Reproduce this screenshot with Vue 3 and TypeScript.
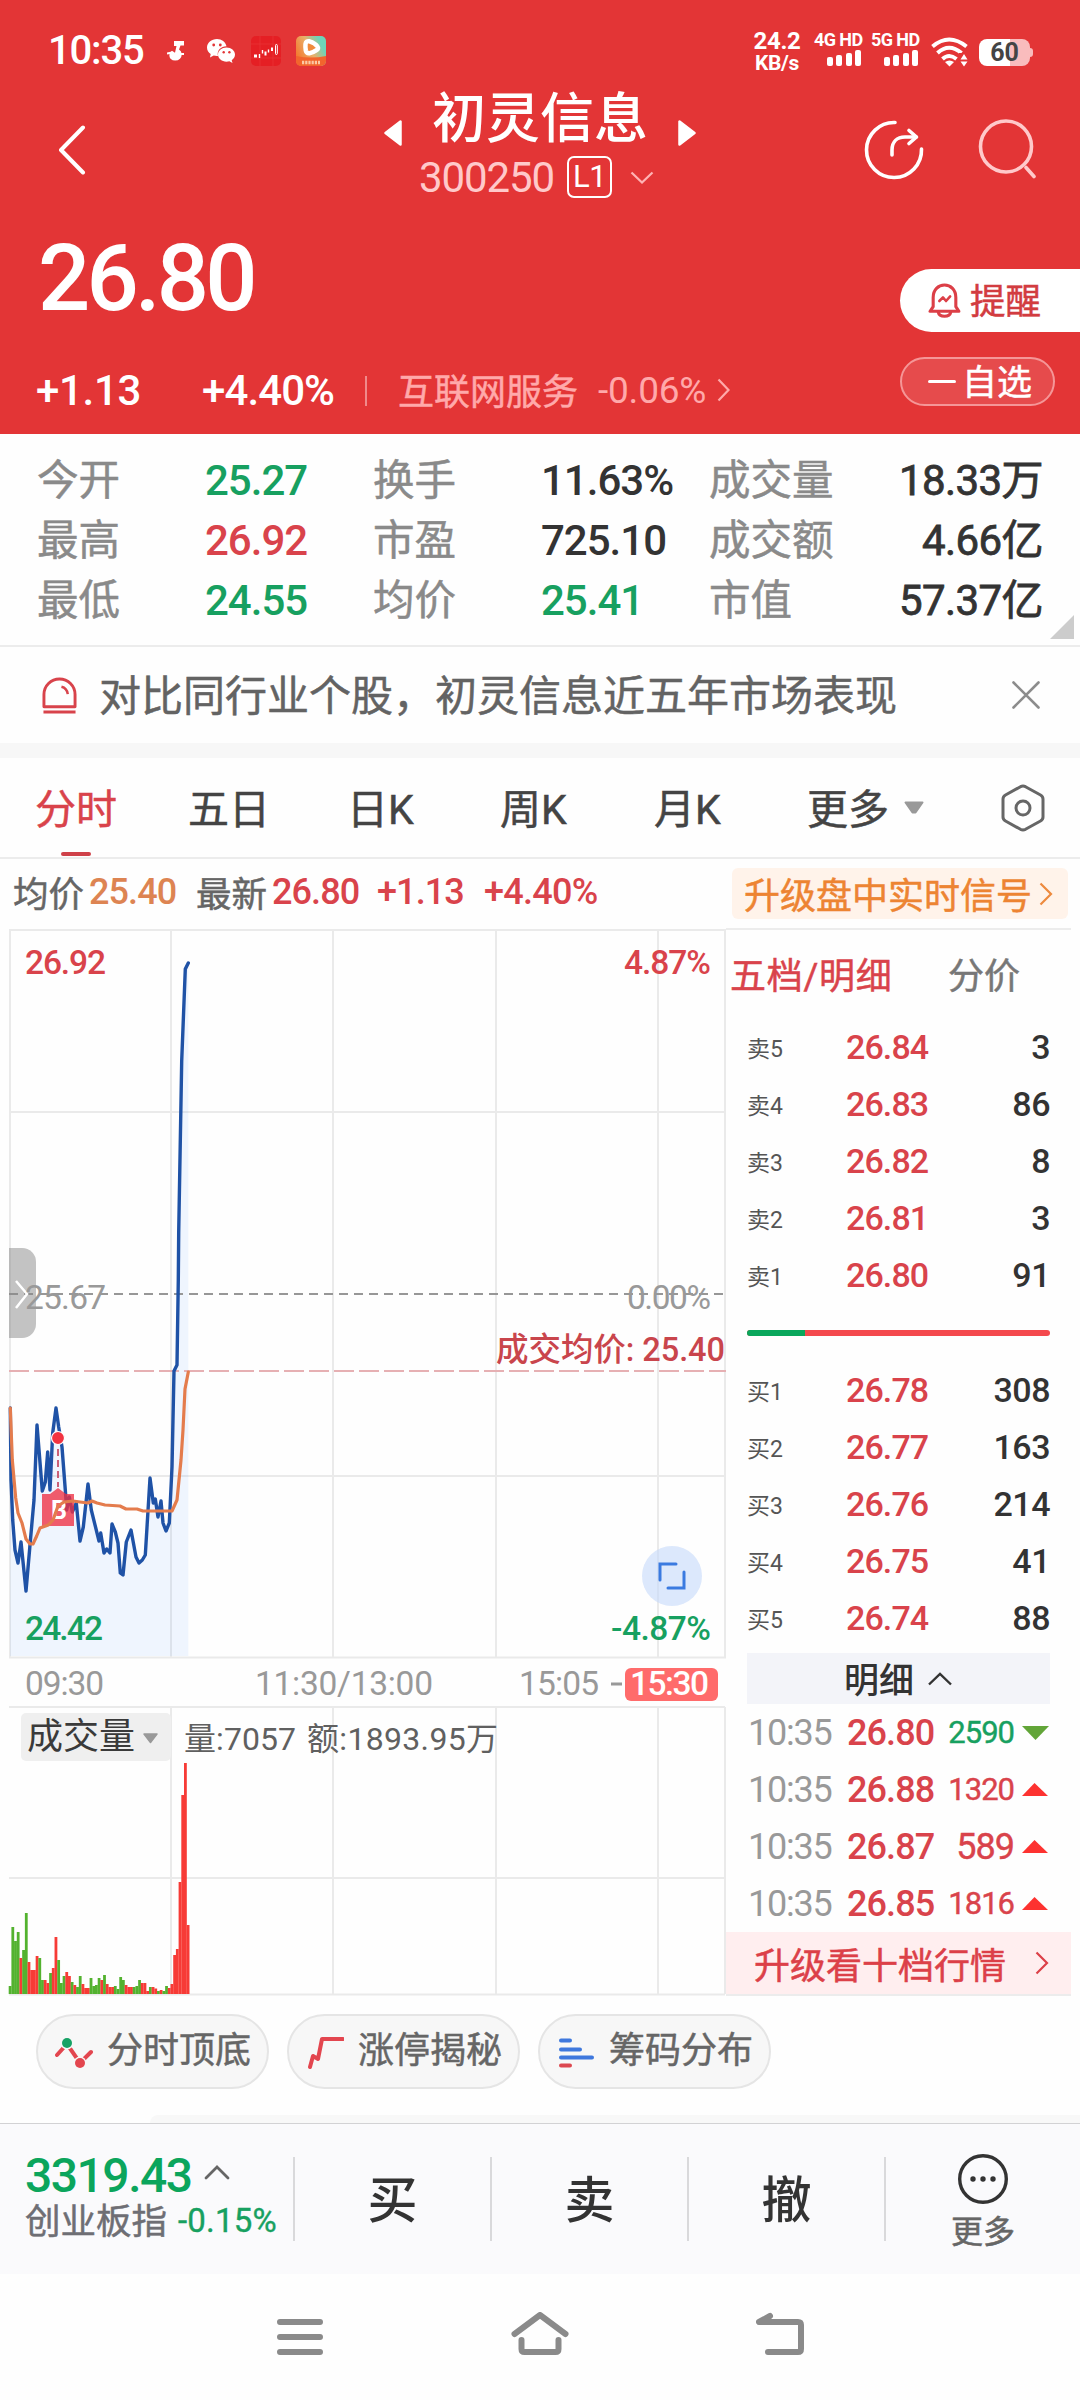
<script setup lang="ts">
type Tone = 'up' | 'down' | 'plain'

interface Stat { label: string; value: string; tone: Tone }
interface Quote { label: string; price: string; volume: string }
interface Tick { price: string; volume: string; tone: Tone; large?: boolean }

const stats: Stat[] = [
  { label: '今开', value: '25.27', tone: 'down' },
  { label: '换手', value: '11.63%', tone: 'plain' },
  { label: '成交量', value: '18.33万', tone: 'plain' },
  { label: '最高', value: '26.92', tone: 'up' },
  { label: '市盈', value: '725.10', tone: 'plain' },
  { label: '成交额', value: '4.66亿', tone: 'plain' },
  { label: '最低', value: '24.55', tone: 'down' },
  { label: '均价', value: '25.41', tone: 'down' },
  { label: '市值', value: '57.37亿', tone: 'plain' },
]

const asks: Quote[] = [
  { label: '卖5', price: '26.84', volume: '3' },
  { label: '卖4', price: '26.83', volume: '86' },
  { label: '卖3', price: '26.82', volume: '8' },
  { label: '卖2', price: '26.81', volume: '3' },
  { label: '卖1', price: '26.80', volume: '91' },
]
const bids: Quote[] = [
  { label: '买1', price: '26.78', volume: '308' },
  { label: '买2', price: '26.77', volume: '163' },
  { label: '买3', price: '26.76', volume: '214' },
  { label: '买4', price: '26.75', volume: '41' },
  { label: '买5', price: '26.74', volume: '88' },
]
const ticks: Tick[] = [
  { price: '26.80', volume: '2590', tone: 'down' },
  { price: '26.88', volume: '1320', tone: 'up' },
  { price: '26.87', volume: '589', tone: 'up', large: true },
  { price: '26.85', volume: '1816', tone: 'up' },
]

const gridX = [171, 333, 496, 658]

const priceLine =
  '10.3,1408 11,1480 12.7,1520 15,1550 18,1563 21,1542 26,1591 30.7,1537 34,1500 37,1425 42.3,1491 45.3,1482 47.7,1452 50,1490 52.7,1433 56,1408 58.7,1427 62,1447 65.3,1490 66.7,1510 69.3,1497 72.3,1512 76.3,1503 80,1541 83.3,1527 88,1484 91.3,1510 99,1541 100.7,1533 104,1553 106.7,1549 110,1553 112,1524 115.3,1532 118,1543 120.3,1573 123,1575 126.3,1542 131,1530 136,1557 139,1563 142.3,1560 145.3,1555 150,1478 153.3,1503 155.3,1499 158,1517 161,1501 163,1523 166,1531 169.3,1523 172,1467 174,1371 177,1365 178.3,1280 178.7,1232 181.7,1061 185.3,969 188.3,963'
const areaShape = `10,1656 ${priceLine} 188.3,1656`
const averageLine =
  '10.3,1408 12.3,1460 15.7,1498 18,1513 22,1523 26,1539 30,1544 33,1544 36.7,1536 40,1528 48.3,1525 53,1520 58,1506 64,1502 73,1501 80,1502 88,1503 92,1501 97,1503 105,1505 120,1506 126,1509 137,1509 143,1511 172,1511 177,1500 181,1460 183,1430 185,1389 188.3,1372'

const volumeHeights = [
  8, 67, 53, 62, 36, 44, 81, 32, 24, 24, 38, 36, 14, 14, 11, 21, 26, 57, 34, 11, 18, 22, 18, 12, 9, 7, 18, 10, 6, 6,
  16, 8, 9, 16, 14, 19, 10, 7, 7, 8, 5, 17, 14, 9, 7, 7, 7, 8, 14, 11, 11, 3, 7, 7, 5.5, 3, 4, 3, 8, 6, 10, 39, 45,
  112, 199, 231, 69,
]
const volumeTones = 'ggggrggrrrrggrrgrrgggrrgrggrrrggggrgrrrgggg' + 'rrrgggrrrgrrgrggrrrrrrrr'
const bars = volumeHeights.map((height, i) => ({
  x: 8.7 + i * 2.697,
  y: 1994 - height,
  height,
  color: volumeTones[i] === 'g' ? '#53b22f' : '#f73b36',
}))
</script>

<template>
  <div class="screen">
    <header class="hero">
      <div class="status">
        <span class="clock">10:35</span>
        <svg class="s-note" viewBox="0 0 18 20"><path d="M7 0h10v4.500h-3.500L12 8.500a6 6 0 0 1 1 9.200 7 7 0 0 1-9.500 0 5.500 5.500 0 0 1 1.500-8l3 2 1.500-6.700H7z" fill="#fff" /><path d="M0 12.500l5-1M12 13h5" stroke="#fff" stroke-width="1.800" /></svg>
        <svg class="s-chat" viewBox="0 0 28 24">
          <path d="M10 0C4.400 0 0 3.800 0 8.500c0 2.700 1.400 5 3.700 6.500L3 18.500l3.700-2c1 .3 2.200.5 3.300.5h1C9.500 11.500 14 7.300 19.500 7.200 18.500 3 14.700 0 10 0z" fill="#fff" />
          <path d="M19.500 8.500c-4.700 0-8.500 3.200-8.500 7.100s3.800 7.200 8.500 7.200c1 0 2-.2 2.900-.5l3.100 1.700-.8-2.800c2-1.300 3.300-3.300 3.300-5.600 0-3.900-3.800-7.100-8.500-7.100z" fill="#fff" />
          <g fill="#e33536"><circle cx="6.700" cy="6" r="1.400" /><circle cx="13.300" cy="6" r="1.400" /><circle cx="16.700" cy="13.200" r="1.200" /><circle cx="22.400" cy="13.200" r="1.200" /></g>
        </svg>
        <svg class="s-stock" viewBox="0 0 30 30">
          <rect width="30" height="30" rx="5" fill="#e51f24" />
          <path d="M0 8h30M0 22h30M9 0v30M22 0v30" stroke="#ea3336" stroke-width=".8" />
          <path d="M3 18.500h3v3H3zM13.500 15.500h2v4h-2zM20 11.500h2V15h-2z" fill="#fff" /><path d="M8.500 18v4M11.500 14v3.500M17.500 13.500v3" stroke="#fff" stroke-width="1.400" /><rect x="24.500" y="8.500" width="1.800" height="10" rx=".9" fill="none" stroke="#fff" />
        </svg>
        <svg class="s-video" viewBox="0 0 30 30">
          <defs><linearGradient id="vid" x1="0" y1=".6" x2="1" y2=".1"><stop offset="0" stop-color="#f47a30" /><stop offset=".45" stop-color="#e9b06a" /><stop offset=".8" stop-color="#6fd3b8" /></linearGradient></defs>
          <rect width="30" height="30" rx="5" fill="url(#vid)" />
          <path d="M0 20q15 3 30 0v5a5 5 0 0 1-5 5H5a5 5 0 0 1-5-5z" fill="#f2652d" />
          <path d="M9.500 8q.5-3.500 4-2.700 5.500 1.700 8 5.200 1.500 2-1 3.700-3.500 2.500-7 3-3 .3-3.700-2.700-.6-3-.3-6.500z" fill="#f08a3c" stroke="#fff" stroke-width="4.500" stroke-linejoin="round" />
          <path d="M6 26.500h18" stroke="#fbc9a4" stroke-width="3.500" stroke-dasharray="2.200 1" />
        </svg>
        <div class="speed"><b>24.2</b><b>KB/s</b></div>
        <div class="net net-a"><b>4G HD</b><i /><i /><i /><i /></div>
        <div class="net net-b"><b>5G HD</b><i /><i /><i /><i /></div>
        <svg class="wifi" viewBox="0 0 37 30">
          <g fill="none" stroke="#fff" stroke-width="4"><path d="M1.500 9.500Q18 -4.500 35.500 9.500" /><path d="M6.500 16Q18 5.500 30.500 16" /><path d="M11.500 22Q18 16 25.500 22" /></g>
          <path d="M14 25q4.500-3 9 0l-4.500 4.500z" fill="#fff" /><path d="M28 16h10v14H28z" fill="#e33536" /><path d="M29.500 22.500l3.500-5.500 3.500 5.500zM29.500 24.500l3.500 5 3.500-5z" fill="#fff" />
        </svg>
        <div class="battery">60</div>
      </div>

      <div class="title-bar">
        <svg class="back" viewBox="0 0 28 50"><path d="M25 2.500L3 25l22 22.500" fill="none" stroke="#fff" stroke-width="4" stroke-linecap="round" stroke-linejoin="round" /></svg>
        <div class="name-block">
          <div class="name-row">
            <svg class="tri" viewBox="0 0 18 26"><path d="M16.500 1.500v23L1.500 13z" fill="#fff" stroke="#fff" stroke-width="2.500" stroke-linejoin="round" /></svg>
            <h1>初灵信息</h1>
            <svg class="tri" viewBox="0 0 18 26"><path d="M1.500 1.500v23L16.500 13z" fill="#fff" stroke="#fff" stroke-width="2.500" stroke-linejoin="round" /></svg>
          </div>
          <div class="code-row">
            <span class="code">300250</span><span class="level">L1</span>
            <svg class="code-more" viewBox="0 0 24 13"><path d="M1.500 1.500L12 11.500 22.500 1.500" fill="none" stroke="#ffb3b4" stroke-width="2.200" /></svg>
          </div>
        </div>
        <svg class="share" viewBox="0 0 60 60">
          <g fill="none" stroke="#fff" stroke-width="3.600" stroke-linecap="round" stroke-linejoin="round"><path d="M31 2.500A27.500 27.500 0 1 0 57.500 29" /><path d="M28 35v-5c0-8 5-13 13-13h11" /><path d="M45 10.500l7.500 6.500-7.500 6.500" /></g>
        </svg>
        <svg class="search" viewBox="0 0 60 60"><g fill="none" stroke="#ffc9ca" stroke-width="3.600" stroke-linecap="round"><circle cx="29" cy="27.500" r="25.500" /><path d="M49 48.500l8 9" /></g></svg>
      </div>

      <div class="price-row">
        <strong class="price">26.80</strong>
        <div class="remind">
          <svg viewBox="0 0 32 34"><g fill="none" stroke="#dc3f47" stroke-width="3" stroke-linejoin="round" stroke-linecap="round"><path d="M2 27.500h28l-3-4.500v-9C27 6.500 22 2 16 2S5 6.500 5 14v9z" /><path d="M10 28.500c1 5 11 5 12 0" /><path d="M11 17.500l3.500-3.500 3 3.500 4-4.500" stroke-width="2.500" /></g></svg>
          <span class="cn">提醒</span>
        </div>
      </div>

      <div class="change-row">
        <span class="chg">+1.13</span>
        <span class="pct">+4.40%</span>
        <i class="bar" />
        <span class="sector">互联网服务</span>
        <span class="sector-pct">-0.06%</span>
        <svg class="sector-go" viewBox="0 0 13 24"><path d="M1.500 1.500L11.500 12 1.500 22.500" fill="none" stroke="#ffa9aa" stroke-width="2.200" /></svg>
        <div class="watch"><i /><span class="cn">自选</span></div>
      </div>
    </header>

    <section class="stats">
      <div v-for="s in stats" :key="s.label" class="stat"><span class="s-label">{{ s.label }}</span><span :class="['s-value', s.tone]">{{ s.value }}</span></div>
      <i class="corner" />
    </section>

    <section class="notice">
      <svg class="alarm" viewBox="0 0 36 38"><g fill="none" stroke="#d8434b" stroke-width="3"><path d="M2 30.500V18a16 16 0 0 1 32 0v12.500z" stroke-linejoin="round" /><path d="M1.500 36h33" /><path d="M20 10c4 1 6 3.500 6.500 7.500" stroke-width="2.500" /></g></svg>
      <span class="cn">对比同行业个股，初灵信息近五年市场表现</span>
      <svg class="close" viewBox="0 0 28 28"><path d="M1.500 1.500l25 25M26.500 1.500l-25 25" stroke="#8c8c8c" stroke-width="2.600" stroke-linecap="round" /></svg>
    </section>

    <nav class="tabs">
      <span class="t1">分时</span><span class="t2">五日</span><span class="t3">日K</span><span class="t4">周K</span><span class="t5">月K</span><span class="t6">更多</span>
      <svg class="t-down" viewBox="0 0 20 13"><path d="M1.500 1.500h17L11.500 11.500h-3z" fill="#999" stroke="#999" stroke-width="2" stroke-linejoin="round" /></svg>
      <svg class="gear" viewBox="0 0 44 48"><g fill="none" stroke="#666" stroke-width="3" stroke-linejoin="round"><path d="M19.500 2.700q2.500-1.200 5 0L39.500 11q2.500 1.400 2.500 4v18q0 2.600-2.500 4L24.500 45.300q-2.500 1.200-5 0L4.500 37Q2 35.600 2 33V15q0-2.600 2.500-4z" /><circle cx="22" cy="24" r="7" /></g></svg>
    </nav>

    <section class="info">
      <span class="i1">均价</span><span class="num i2">25.40</span><span class="i3">最新</span><span class="num red i4">26.80</span><span class="num red i5">+1.13</span><span class="num red i6">+4.40%</span>
      <div class="signal"><span>升级盘中实时信号</span><svg viewBox="0 0 14 24"><path d="M1.500 1.500L12 12 1.500 22.500" fill="none" stroke="#ed8a3e" stroke-width="2.200" /></svg></div>
    </section>

    <section class="market">
      <svg class="chart" viewBox="0 928 726 1068">
        <g class="grid">
          <path d="M9 930H726M9 1657.500H726" stroke-width="3" />
          <path d="M9 1112H725M9 1476H725M9 1707H725M9 1878H725M9 1994.500H725" />
          <path d="M10 930V1657M725 930V1657M725 1707V1994" />
          <path v-for="x in gridX" :key="x" :d="`M${x} 930V1657M${x} 1707V1994`" />
        </g>
        <polygon :points="areaShape" fill="#2a7aff" fill-opacity=".07" />
        <path d="M9 1294H724" stroke="#979797" stroke-width="2" stroke-dasharray="9 6" />
        <path d="M9 1371H726" stroke="#e6b0b3" stroke-width="2" stroke-dasharray="20 5" />
        <polyline :points="priceLine" fill="none" stroke="#1f52a6" stroke-width="3.400" stroke-linejoin="round" stroke-linecap="round" />
        <path d="M58 1449V1487" stroke="#c5506a" stroke-width="1.800" stroke-dasharray="7 4" />
        <circle cx="58" cy="1438" r="6.500" fill="#f23341" stroke="#fff" stroke-width="1.200" />
        <path d="M42 1494h8l8-6 8 6h8v32H42z" fill="#ee3042" fill-opacity=".78" />
        <text x="59" y="1519" text-anchor="middle" font-size="25" font-weight="700" fill="#fff">B</text>
        <polyline :points="averageLine" fill="none" stroke="#e47c4d" stroke-width="3.200" stroke-linejoin="round" stroke-linecap="round" />

        <path d="M9 1248h13a14 14 0 0 1 14 14v62a14 14 0 0 1-14 14H9z" fill="#888" fill-opacity=".5" />
        <path d="M16 1281l11 13-11 14" fill="none" stroke="#fff" stroke-width="2.500" />

        <g class="labels" font-size="33.500">
          <text x="25" y="974" textLength="81" fill="#d9434b">26.92</text>
          <text x="624" y="974" textLength="87" fill="#d9434b">4.87%</text>
          <text x="25" y="1309" textLength="81" fill="#999" class="book-weight">25.67</text>
          <text x="627" y="1309" textLength="84" fill="#999" class="book-weight">0.00%</text>
          <text x="25" y="1640" textLength="78" fill="#17a060">24.42</text>
          <text x="611" y="1640" textLength="100" fill="#17a060">-4.87%</text>
          <text x="496" y="1361" textLength="229" font-size="32.500" fill="#c9454c">成交均价: 25.40</text>
          <g fill="#999" class="regular">
            <text x="25" y="1695" textLength="79">09:30</text>
            <text x="255" y="1695" textLength="178">11:30/13:00</text>
            <text x="519" y="1695" textLength="80">15:05</text>
            <path d="M611 1684h11" stroke="#999" stroke-width="3" />
          </g>
          <rect x="625" y="1668" width="93" height="33" rx="6" fill="#ff6b6b" />
          <text x="630" y="1695" textLength="79" fill="#fff">15:30</text>
        </g>

        <circle cx="672" cy="1576" r="30" fill="#c5d8fa" fill-opacity=".6" />
        <path d="M676 1564h-16v16M684 1572v16h-16" fill="none" stroke="#3a7ae0" stroke-width="3" stroke-linecap="round" />

        <rect x="21" y="1713" width="150" height="48" rx="5" fill="#efefef" />
        <text x="27" y="1749" textLength="108" font-size="36" fill="#3a3a3a">成交量</text>
        <path d="M144 1734h13l-6.500 8.500z" fill="#999" stroke="#999" stroke-width="1.500" stroke-linejoin="round" />
        <g class="regular" font-size="32" fill="#606060">
          <text x="184" y="1750" textLength="112">量:7057</text>
          <text x="307" y="1750" textLength="191">额:1893.95万</text>
        </g>
        <rect v-for="(b, i) in bars" :key="i" :x="b.x" :y="b.y" width="2.800" :height="b.height" :fill="b.color" />
      </svg>

      <aside class="book">
        <div class="book-tabs"><span class="on">五档/明细</span><span>分价</span></div>
        <div class="quotes">
          <div v-for="q in asks" :key="q.label" class="quote"><span class="q-label">{{ q.label }}</span><span class="q-price">{{ q.price }}</span><span class="q-vol">{{ q.volume }}</span></div>
        </div>
        <div class="ratio"><i /></div>
        <div class="quotes">
          <div v-for="q in bids" :key="q.label" class="quote"><span class="q-label">{{ q.label }}</span><span class="q-price">{{ q.price }}</span><span class="q-vol">{{ q.volume }}</span></div>
        </div>
        <div class="detail-head"><span>明细</span><svg viewBox="0 0 26 14"><path d="M2 12.500L13 2l11 10.500" fill="none" stroke="#333" stroke-width="2.400" /></svg></div>
        <div v-for="t in ticks" :key="t.price" class="tick">
          <span class="k-time">10:35</span><span class="k-price">{{ t.price }}</span><span :class="['k-vol', t.tone, { large: t.large }]">{{ t.volume }}</span>
          <svg viewBox="0 0 27 14"><path v-if="t.tone === 'down'" d="M0 0h27L13.500 14z" fill="#62a538" /><path v-else d="M0 13h26L12.500 0z" fill="#fd3230" /></svg>
        </div>
        <div class="ten"><span>升级看十档行情</span><svg viewBox="0 0 14 24"><path d="M1.500 1.500L12 12 1.500 22.500" fill="none" stroke="#dc4048" stroke-width="2.200" /></svg></div>
      </aside>
    </section>

    <section class="chips">
      <div class="chip">
        <svg viewBox="0 0 38 38"><path d="M2 22L12 11 25 30 36 19" fill="none" stroke="#e3464f" stroke-width="4" stroke-linecap="round" /><circle cx="12" cy="10" r="6.500" fill="#f7f7f7" /><circle cx="12" cy="10" r="5" fill="#17a265" /><circle cx="25" cy="30" r="6.500" fill="#f7f7f7" /><circle cx="25" cy="30" r="5" fill="#e3464f" /></svg>
        <span>分时顶底</span>
      </div>
      <div class="chip">
        <svg viewBox="0 0 38 38"><path d="M4 34L7 23l5 3L16 6h21" fill="none" stroke="#e3464f" stroke-width="4" stroke-linecap="round" stroke-linejoin="round" /></svg>
        <span>涨停揭秘</span>
      </div>
      <div class="chip">
        <svg viewBox="0 0 38 38"><g stroke-width="4" stroke-linecap="round"><path d="M4 7.500h9M4 16.500h19M4 24.500h31" stroke="#3f78dd" /><path d="M4 32.500h9" stroke="#dc4850" /></g></svg>
        <span>筹码分布</span>
      </div>
    </section>
    <div class="peek" />

    <footer class="trade">
      <div class="index">
        <div class="idx-top"><span class="idx-val">3319.43</span><svg viewBox="0 0 26 16"><path d="M2 14L13 3l11 11" fill="none" stroke="#666" stroke-width="2.800" stroke-linecap="round" /></svg></div>
        <div class="idx-low"><span class="cn">创业板指</span><span class="idx-pct">-0.15%</span></div>
      </div>
      <div class="act">买</div><div class="act">卖</div><div class="act">撤</div>
      <div class="more">
        <svg viewBox="0 0 50 50"><circle cx="25" cy="25" r="23.300" fill="none" stroke="#333" stroke-width="3.400" /><g fill="#333"><circle cx="15" cy="25" r="2.700" /><circle cx="25" cy="25" r="2.700" /><circle cx="35" cy="25" r="2.700" /></g></svg>
        <span>更多</span>
      </div>
    </footer>

    <div class="system">
      <svg viewBox="0 0 48 48"><path d="M4 10h40M4 25h40M4 40h40" stroke="#8a8a8a" stroke-width="6" stroke-linecap="round" /></svg>
      <svg class="home" viewBox="0 0 60 48"><g fill="none" stroke="#8a8a8a" stroke-width="6" stroke-linecap="round" stroke-linejoin="round"><path d="M4.500 22L30 3 55.500 22" /><path d="M11.500 28v9q0 3 3 3h31q3 0 3-3v-9" /></g></svg>
      <svg viewBox="0 0 48 48"><path d="M14 4L3 10h39q3 0 3 3v24q0 3-3 3H12" fill="none" stroke="#8a8a8a" stroke-width="6" stroke-linecap="round" stroke-linejoin="round" /></svg>
    </div>
  </div>
</template>

<style>
body { margin: 0; background: #fff; }
</style>

<style scoped>
.screen { width: 1080px; height: 2400px; overflow: hidden; display: flex; flex-direction: column; background: #fefefe; color: #333; font-family: Roboto, "Noto Sans CJK SC", sans-serif; white-space: nowrap; }
.screen > * { flex: none; box-sizing: border-box; }
svg { display: block; flex: none; }
i { display: block; flex: none; }
span { flex: none; }
.cn { padding-bottom: 5px; }
.cn, .sector, .s-label, .tabs span, .i1, .i3, .signal span, .book-tabs span, .ten span, .chip span, .more span { -webkit-text-stroke: .5px; }

.hero { height: 434px; background: #e33536; color: #fff; }
.status { height: 72px; padding: 30px 0 0 48px; box-sizing: border-box; display: flex; align-items: flex-start; }
.clock { width: 119px; font-size: 40px; line-height: 41px; font-weight: 500; letter-spacing: -1.200px; }
.s-note { width: 18px; height: 20px; margin: 11px 22px 0 0; }
.s-chat { width: 28px; height: 24px; margin: 9px 16px 0 0; }
.s-stock { width: 30px; height: 30px; margin: 6px 15px 0 0; }
.s-video { width: 30px; height: 30px; margin: 6px 421px 0 0; }
.speed { width: 60px; display: flex; flex-direction: column; align-items: center; margin-top: 1px; }
.speed b { font-size: 24px; line-height: 21px; font-weight: 700; letter-spacing: -.3px; }
.speed b + b { font-size: 21px; line-height: 22px; }
.net { width: 47px; height: 36px; display: flex; justify-content: flex-end; align-items: flex-end; flex-wrap: wrap; gap: 0 3.500px; }
.net b { width: 47px; font-size: 18px; line-height: 20px; letter-spacing: -.6px; }
.net i { width: 6px; height: 9px; border-radius: 2px; background: #fff; }
.net i:nth-of-type(2) { height: 11px; }
.net i:nth-of-type(3) { height: 13px; }
.net i:nth-of-type(4) { height: 16px; }
.net-a { margin-left: 7px; }
.net-b { margin-left: 10px; }
.wifi { width: 37px; height: 30px; margin: 7px 0 0 13px; }
.battery { width: 51px; height: 27px; margin: 9px 0 0 11px; border-radius: 8px; background: linear-gradient(90deg, #fff 60%, #f9bcbd 60%); color: #444; font-size: 25px; line-height: 27px; font-weight: 700; text-align: center; position: relative; }
.battery::after { content: ""; position: absolute; left: 51px; top: 9px; width: 3px; height: 9px; border-radius: 0 3px 3px 0; background: #f9bcbd; }

.title-bar { height: 130px; display: flex; }
.back { width: 28px; height: 50px; margin: 53px 0 0 58px; }
.name-block { width: 312px; margin: 14px 0 0 298px; }
.name-row { display: flex; align-items: center; justify-content: space-between; height: 66px; }
.tri { width: 18px; height: 26px; margin-top: 28px; }
h1 { margin: 0; font-size: 54px; line-height: 66px; font-weight: 500; padding-top: 1px; }
.code-row { display: flex; align-items: center; height: 50px; padding-left: 35px; }
.code { width: 148px; font-size: 42px; letter-spacing: -1.100px; color: #ffc9ca; }
.level { width: 41px; height: 38px; border: 2px solid #fff; border-radius: 7px; font-size: 31px; line-height: 38px; text-align: center; letter-spacing: -.5px; }
.code-more { width: 24px; height: 13px; margin-left: 18px; }
.share { width: 60px; height: 60px; margin: 48px 0 0 168px; }
.search { width: 60px; height: 60px; margin: 47px 0 0 53px; }

.price-row { height: 146px; display: flex; justify-content: space-between; }
.price { margin: 28px 0 0 38px; font-size: 92px; line-height: 98px; height: 98px; font-weight: 500; letter-spacing: -3.800px; }
.remind { width: 180px; height: 63px; margin-top: 67px; box-sizing: border-box; padding-left: 28px; border-radius: 32px 0 0 32px; background: #fff; color: #d23c40; display: flex; align-items: center; font-size: 35.500px; }
.remind svg { width: 33px; height: 35px; margin-right: 9px; }

.change-row { height: 64px; display: flex; align-items: center; padding-left: 36px; font-size: 42px; font-weight: 500; }
.change-row > * { margin-top: 22px; }
.chg { width: 166px; letter-spacing: -.3px; margin-top: 21px; }
.pct { width: 163px; letter-spacing: -.9px; margin-top: 21px; }
.bar { width: 2px; height: 30px; background: #f08a8b; margin-right: 31px; }
.sector { width: 200px; font-size: 36px; font-weight: 400; color: #ffa9aa; margin-top: 17px; }
.sector-pct { width: 119px; font-size: 37px; font-weight: 400; letter-spacing: -.2px; color: #ffa9aa; margin-top: 20px; }
.sector-go { width: 13px; height: 24px; margin-top: 20px; }
.watch { width: 155px; height: 49px; margin: 3px 0 0 170px; box-sizing: border-box; padding-left: 26px; border: 2px solid #f59697; border-radius: 25px; background: #e64b4c; display: flex; align-items: center; font-size: 35px; font-weight: 400; }
.watch i { width: 28px; height: 3px; border-radius: 2px; background: #fff; margin-right: 6px; }

.stats { position: relative; height: 213px; padding: 17px 37px 0; border-bottom: 2px solid #ececec; display: grid; grid-template-columns: 336px 336px 334px; grid-auto-rows: 60px; }
.stat { display: flex; align-items: center; font-size: 42px; line-height: 60px; }
.s-label { width: 168px; font-size: 41.500px; color: #8a8a8a; }
.s-value { font-weight: 500; letter-spacing: -1px; }
.stat:nth-child(3n) .s-label { width: 130px; }
.stat:nth-child(3n) .s-value { flex: 1; text-align: right; font-weight: 400; letter-spacing: -.6px; -webkit-text-stroke: .8px; }
.up, .red { color: #d9434b; }
.down { color: #17a060; }
.plain { color: #333; }
.corner { position: absolute; right: 6px; bottom: 6px; width: 24px; height: 24px; background: #ccc; clip-path: polygon(100% 0, 100% 100%, 0 100%); }

.notice { height: 111px; padding-left: 42px; border-bottom: 15px solid #f7f7f7; display: flex; align-items: center; font-size: 42px; color: #636363; }
.alarm { width: 35px; height: 37px; margin-right: 22px; }
.close { width: 28px; height: 28px; margin-left: 115px; }

.tabs { height: 101px; border-bottom: 2px solid #ececec; display: flex; align-items: center; padding: 0 0 0 35px; font-size: 41px; color: #444; }
.tabs span { padding-bottom: 4px; }
.t1 { width: 153px; color: #d9434b; position: relative; }
.t1::after { content: ""; position: absolute; left: 26px; top: 76px; width: 30px; height: 4px; border-radius: 2px; background: #cf4149; }
.t2 { width: 159px; } .t3 { width: 153px; } .t4 { width: 154px; } .t5 { width: 153px; } .t6 { width: 97px; }
.t-down { width: 20px; height: 13px; }
.gear { width: 44px; height: 48px; margin-left: 77px; }

.info { height: 69px; display: flex; align-items: center; padding: 0 0 4px 13px; font-size: 35.500px; color: #666; }
.num { font-size: 36px; font-weight: 500; letter-spacing: -.9px; }
.i1 { width: 76px; padding-bottom: 1px; } .i2 { width: 107px; color: #dd8452; } .i3 { width: 76px; padding-bottom: 1px; } .i4 { width: 105px; } .i5 { width: 107px; } .i6 { width: 248px; letter-spacing: -.7px; }
.signal { width: 336px; height: 51px; margin-top: 4px; box-sizing: border-box; padding-left: 12px; border-radius: 6px; background: #fff3ea; color: #ed8432; display: flex; align-items: center; font-size: 36px; }
.signal span { padding-bottom: 2px; }
.signal svg { width: 14px; height: 24px; margin-left: 7px; }

.market { height: 1068px; display: flex; }
.chart { width: 726px; height: 1068px; }
.chart .grid path { fill: none; stroke: #eaeaea; stroke-width: 2; }
.labels text { font-weight: 500; }
.regular text, .labels .regular text, .labels .book-weight { font-weight: 400; stroke: currentColor; stroke-width: 0; }

.book { width: 345px; height: 1068px; box-sizing: border-box; border-bottom: 2px solid #ececec; border-top: 2px solid #ececec; }
.book-tabs { height: 90px; padding-left: 4px; display: flex; align-items: center; font-size: 36px; color: #777; }
.book-tabs span { padding-bottom: 5px; }
.book-tabs .on { width: 218px; color: #d9434b; letter-spacing: .7px; }
.quotes { padding-left: 21px; }
.quote { width: 303px; height: 57px; box-sizing: border-box; padding-bottom: 3px; display: flex; align-items: center; }
.q-label { width: 99px; font-size: 23px; color: #555; }
.q-price { font-size: 34px; font-weight: 500; letter-spacing: -.9px; color: #d9434b; }
.q-vol { flex: 1; text-align: right; font-size: 34px; font-weight: 500; letter-spacing: -.5px; }
.ratio { width: 303px; height: 6px; margin: 25px 0 27px 21px; border-radius: 3px; overflow: hidden; background: #f4494d; }
.ratio i { width: 58px; height: 6px; background: #0aa75c; }
.detail-head { width: 303px; height: 51px; margin: 5px 0 0 21px; background: #f3f4f9; display: flex; align-items: center; justify-content: center; gap: 13px; font-size: 35px; font-weight: 500; }
.detail-head span { padding-bottom: 3px; }
.detail-head svg { width: 26px; height: 14px; }
.tick { height: 57px; padding-left: 22px; display: flex; align-items: center; font-size: 36px; }
.k-time { width: 99px; letter-spacing: -1.200px; color: #999; }
.k-price { width: 90px; font-weight: 500; letter-spacing: -.9px; color: #d9434b; }
.k-vol { width: 77px; text-align: right; font-size: 31px; letter-spacing: -1px; -webkit-text-stroke: .4px; }
.k-vol.large { font-size: 36px; }
.tick svg { width: 27px; height: 14px; margin-left: 8px; }
.ten { height: 62px; margin-top: 0; padding-left: 28px; background: #ffeeef; color: #dc4048; display: flex; align-items: center; font-size: 36px; }
.ten span { padding-bottom: 1px; }
.ten svg { width: 14px; height: 24px; margin-left: 29px; }

.chips { height: 93px; padding: 18px 0 0 36px; display: flex; gap: 18px; }
.chip { width: 233px; height: 75px; box-sizing: border-box; padding-left: 17px; border: 2px solid #e5e5e5; border-radius: 38px; background: #f7f7f7; display: flex; align-items: center; font-size: 36px; color: #666; }
.chip svg { width: 38px; height: 38px; margin-right: 14px; }
.chip span { padding-bottom: 9px; }
.peek { height: 8px; margin: 26px 0 0 150px; border-radius: 9px 0 0 0; background: #f8f8f8; }

.trade { height: 151px; border-top: 1px solid #d2d2d4; background: #fafafc; display: flex; padding-left: 25px; }
.index { width: 268px; }
.idx-top { height: 50px; margin-top: 26px; display: flex; align-items: center; }
.idx-val { width: 179px; font-size: 48px; font-weight: 500; letter-spacing: -1.500px; color: #0ba55c; }
.idx-top svg { width: 26px; height: 16px; margin-top: -7px; }
.idx-low { height: 40px; display: flex; align-items: center; font-size: 35.500px; color: #6e6e74; margin-top: 1px; }
.idx-pct { margin-left: 11px; font-size: 33px; letter-spacing: .2px; color: #17a060; -webkit-text-stroke: .4px; padding-bottom: 1px; }
.act { width: 197px; height: 84px; margin-top: 33px; box-sizing: border-box; border-left: 2px solid #d9d9db; text-align: center; font-size: 50px; line-height: 88px; font-weight: 500; }
.more { width: 196px; height: 84px; margin-top: 33px; box-sizing: border-box; border-left: 2px solid #d9d9db; display: flex; flex-direction: column; align-items: center; color: #666; font-size: 32px; line-height: 36px; }
.more svg { width: 50px; height: 50px; margin-top: -3px; margin-bottom: 10px; }

.system { height: 126px; display: flex; padding: 38px 0 0 276px; }
.system svg { width: 48px; height: 48px; }
.system .home { width: 60px; margin: 0 186px; }
</style>
